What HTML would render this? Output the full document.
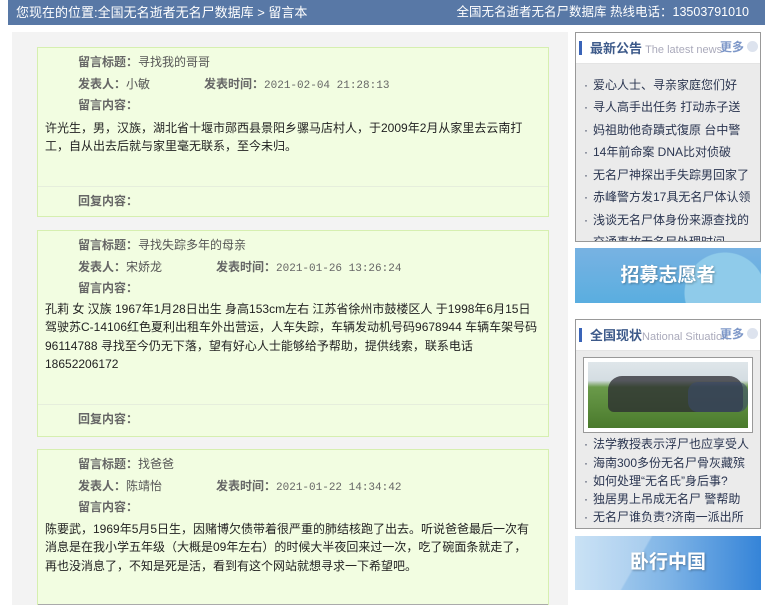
<!DOCTYPE html>
<html><head><meta charset="utf-8">
<style>
*{margin:0;padding:0;box-sizing:border-box}
html,body{width:771px;height:605px;overflow:hidden}
body{background:#fff;font-family:"Liberation Sans","SimSun","Noto Sans CJK SC",sans-serif;font-size:12px;color:#222;position:relative}
.top{position:absolute;left:8px;top:0;width:757px;height:25px;background:#5878a6;color:#fff;font-size:13px;line-height:25px}
.top .l{position:absolute;left:8px}
.top .r{position:absolute;right:16px;font-size:12.5px}
.main{position:absolute;left:12px;top:32px;width:556px;height:573px;background:#f3f3f3;overflow:hidden}
.card{position:absolute;left:25px;width:512px;background:#f2fde1;border:1px solid #d6efb0}
.row{position:absolute;left:40px;height:18px;line-height:18px;color:#555}
.row b{color:#666;font-weight:bold}
.v{font-family:"Liberation Mono","Noto Sans CJK SC",monospace;font-size:11px;color:#666}
.txt{position:absolute;left:7px;right:10px;line-height:18.3px;color:#222}
.sep{position:absolute;left:0;right:0;height:1px;background:#e6eedc}
.box{position:absolute;left:575px;width:186px;border:1px solid #999;background:#ebebeb}
.bh{height:31px;background:#fff;position:relative;border-bottom:1px solid #e4e4e4}
.bh .bar{position:absolute;left:3px;top:8px;width:3px;height:14px;background:#3a64b8}
.bh .t{position:absolute;left:14px;top:5px;font-size:13px;font-weight:bold;color:#3d5a8a}
.bh .e{font-size:11px;color:#aab;font-weight:normal}
.bh .m{position:absolute;right:16px;top:5px;font-size:12px;color:#7d97c8;font-weight:bold}
.bh .c{position:absolute;right:2px;top:8px;width:11px;height:11px;border-radius:50%;background:#dde3ee}
.li{position:absolute;left:8px;color:#2a3550;font-size:12px;white-space:nowrap}
.li:before{content:"·";margin-right:5px}
.ban{position:absolute;left:575px;width:186px;color:#fff;font-weight:bold;font-size:19px;text-align:center;text-shadow:1px 1px 2px rgba(0,0,0,.3);overflow:hidden}
</style></head><body>
<div class="top"><span class="l">您现在的位置:全国无名逝者无名尸数据库 &gt; 留言本</span><span class="r">全国无名逝者无名尸数据库 热线电话：13503791010</span></div>
<div class="main">
<div class="card" style="top:15px;height:170px">
<div class="row" style="top:5px"><b>留言标题：</b>寻找我的哥哥</div>
<div class="row" style="top:27px"><b>发表人：</b>小敏</div>
<div class="row" style="top:27px;left:166px"><b>发表时间：</b><span class="v">2021-02-04 21:28:13</span></div>
<div class="row" style="top:48px"><b>留言内容：</b></div>
<div class="txt" style="top:71px">许光生，男，汉族，湖北省十堰市郧西县景阳乡骡马店村人，于2009年2月从家里去云南打工，自从出去后就与家里毫无联系，至今未归。</div>
<div class="sep" style="top:138px"></div>
<div class="row" style="top:144px"><b>回复内容：</b></div>
</div>
<div class="card" style="top:198px;height:207px">
<div class="row" style="top:5px"><b>留言标题：</b>寻找失踪多年的母亲</div>
<div class="row" style="top:27px"><b>发表人：</b>宋娇龙</div>
<div class="row" style="top:27px;left:178px"><b>发表时间：</b><span class="v">2021-01-26 13:26:24</span></div>
<div class="row" style="top:48px"><b>留言内容：</b></div>
<div class="txt" style="top:69px">孔莉 女 汉族 1967年1月28日出生 身高153cm左右 江苏省徐州市鼓楼区人 于1998年6月15日驾驶苏C-14106红色夏利出租车外出营运，人车失踪，车辆发动机号码9678944 车辆车架号码96114788 寻找至今仍无下落，望有好心人士能够给予帮助，提供线索，联系电话18652206172</div>
<div class="sep" style="top:173px"></div>
<div class="row" style="top:179px"><b>回复内容：</b></div>
</div>
<div class="card" style="top:417px;height:156px;border-bottom:none">
<div class="row" style="top:5px"><b>留言标题：</b>找爸爸</div>
<div class="row" style="top:27px"><b>发表人：</b>陈靖怡</div>
<div class="row" style="top:27px;left:178px"><b>发表时间：</b><span class="v">2021-01-22 14:34:42</span></div>
<div class="row" style="top:48px"><b>留言内容：</b></div>
<div class="txt" style="top:70px">陈要武，1969年5月5日生，因赌博欠债带着很严重的肺结核跑了出去。听说爸爸最后一次有消息是在我小学五年级（大概是09年左右）的时候大半夜回来过一次，吃了碗面条就走了，再也没消息了，不知是死是活，看到有这个网站就想寻求一下希望吧。</div>
<div class="sep" style="top:154px;background:#aaa"></div>
</div>
</div>

<div class="box" style="top:32px;height:210px">
<div class="bh"><div class="bar"></div><div class="t">最新公告<span class="e"> The latest news</span></div><div class="m">更多</div><div class="c"></div></div>
<div class="li" style="top:43px">爱心人士、寻亲家庭您们好</div>
<div class="li" style="top:65px">寻人高手出任务 打动赤子送</div>
<div class="li" style="top:88px">妈祖助他奇蹟式復原 台中警</div>
<div class="li" style="top:110px">14年前命案 DNA比对侦破</div>
<div class="li" style="top:133px">无名尸神探出手失踪男回家了</div>
<div class="li" style="top:155px">赤峰警方发17具无名尸体认领</div>
<div class="li" style="top:178px">浅谈无名尸体身份来源查找的</div>
<div class="li" style="top:200px;height:8px;overflow:hidden">交通事故无名尸处理时间</div>
</div>
<div class="ban" style="top:248px;height:55px;line-height:55px;background:radial-gradient(circle at 150px 45px,#8fcbea 0,#8fcbea 40px,transparent 41px),linear-gradient(180deg,#78b2e2,#5aaee0)">招募志愿者</div>

<div class="box" style="top:319px;height:210px">
<div class="bh"><div class="bar"></div><div class="t">全国现状<span class="e">National Situation</span></div><div class="m">更多</div><div class="c"></div></div>
<div style="position:absolute;left:7px;top:37px;width:170px;height:76px;border:1px solid #999;background:#fff;padding:4px">
<div style="width:100%;height:100%;background:linear-gradient(180deg,#dfe6ea 0,#d4dde2 28%,#6a9a4a 38%,#4a7a2c 100%);position:relative;overflow:hidden">
<div style="position:absolute;left:20px;top:14px;width:135px;height:36px;background:#2a2a30;border-radius:14px 14px 6px 6px;opacity:.75"></div>
<div style="position:absolute;left:100px;top:20px;width:60px;height:30px;background:#3a4a6a;border-radius:10px;opacity:.6"></div>
</div></div>
<div class="li" style="top:115px">法学教授表示浮尸也应享受人</div>
<div class="li" style="top:134px">海南300多份无名尸骨灰藏殡</div>
<div class="li" style="top:152px">如何处理“无名氏”身后事?</div>
<div class="li" style="top:170px">独居男上吊成无名尸 警帮助</div>
<div class="li" style="top:188px">无名尸谁负责?济南一派出所</div>
</div>
<div class="ban" style="top:536px;height:54px;line-height:54px;background:linear-gradient(120deg,rgba(255,255,255,.25) 0,rgba(255,255,255,.25) 35%,transparent 36%),linear-gradient(90deg,#b8d8f2,#7fb4e6 50%,#3584d8)">卧行中国</div>
</body></html>
